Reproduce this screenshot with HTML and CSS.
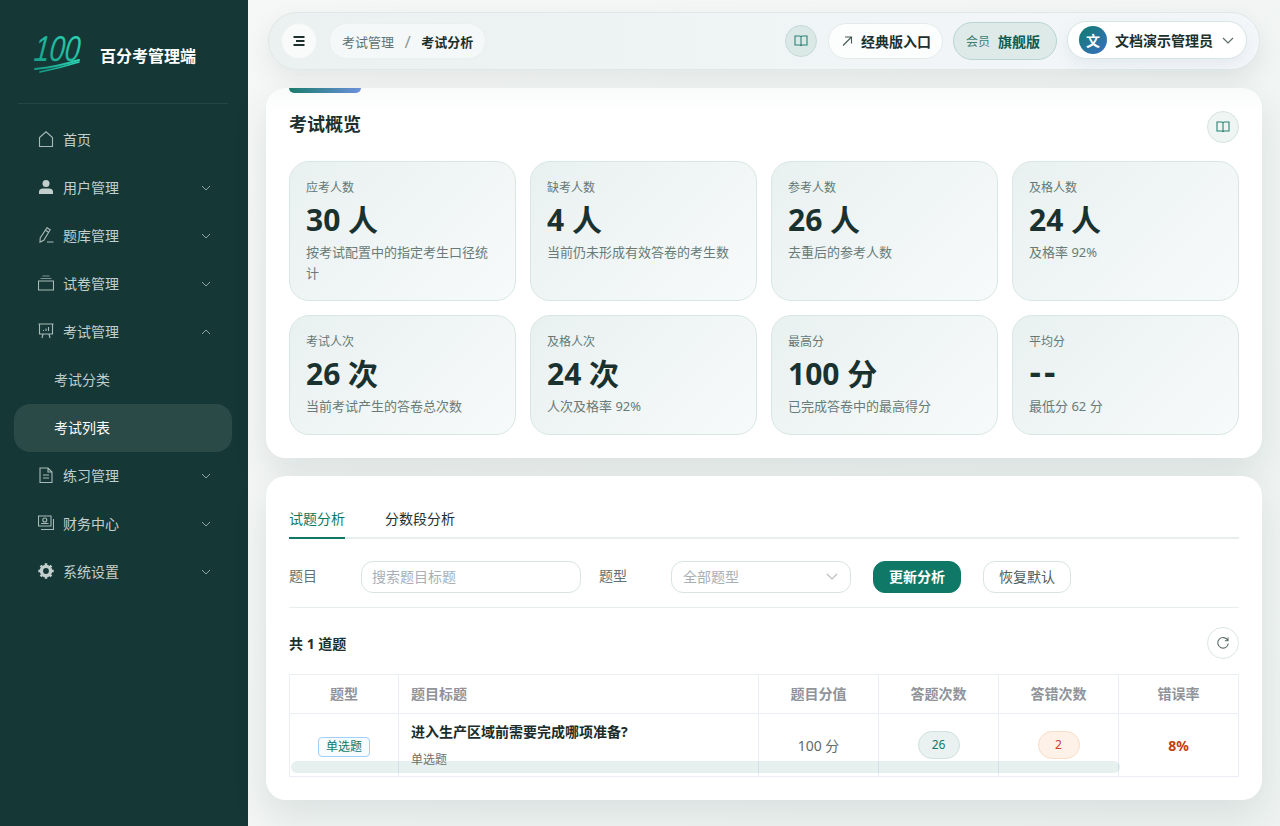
FILE: index.html
```html
<!DOCTYPE html>
<html lang="zh-CN">
<head>
  <meta charset="UTF-8" />
  <meta name="viewport" content="width=device-width, initial-scale=1.0"/>
  <title>考试分析</title>
  <link rel="stylesheet" href="styles.css">
</head>
<body>
  <!-- Sidebar -->
  <aside class="sidebar">
    <div class="brand">
      <svg class="brand-logo" width="52" height="42" viewBox="0 0 52 42">
        <defs>
          <linearGradient id="logoGrad" x1="0" y1="1" x2="1" y2="0">
            <stop offset="0" stop-color="#159a86"/>
            <stop offset="1" stop-color="#2dd8b8"/>
          </linearGradient>
        </defs>
        <text class="brand-num" x="4" y="27" textLength="46" lengthAdjust="spacingAndGlyphs" transform="skewX(-6)" fill="url(#logoGrad)">100</text>
        <path d="M3 35 Q25 33 47 26" fill="none" stroke="url(#logoGrad)" stroke-width="2" stroke-linecap="round"/>
        <path d="M8 38 Q28 34 47 28" fill="none" stroke="url(#logoGrad)" stroke-width="1.600" stroke-linecap="round"/>
      </svg>
      <span class="brand-name">百分考管理端</span>
    </div>

    <nav class="nav">
      <a class="nav-item">
        <svg class="nav-icon" viewBox="0 0 16 16"><path d="M1.500 15.500V6.500L8 .8l6.500 5.700v9z"/></svg>
        <span>首页</span>
      </a>
      <a class="nav-item">
        <svg class="nav-icon" viewBox="0 0 16 16"><circle class="solid" cx="8" cy="4.500" r="3.500"/><path class="solid" d="M1 15v-2.500C1 10.500 3 9.500 5 9.500h6c2 0 4 1 4 3V15z"/></svg>
        <span>用户管理</span>
        <svg class="nav-arrow" viewBox="0 0 10 6"><path d="M1 1l4 4 4-4"/></svg>
      </a>
      <a class="nav-item">
        <svg class="nav-icon" viewBox="0 0 16 16"><path d="M9 .8l3.200 2-6.400 10.400-3.800 1.800.2-4zM7.500 3.200l3.200 2M9 15h6.500"/></svg>
        <span>题库管理</span>
        <svg class="nav-arrow" viewBox="0 0 10 6"><path d="M1 1l4 4 4-4"/></svg>
      </a>
      <a class="nav-item">
        <svg class="nav-icon" viewBox="0 0 16 16"><path d="M.5 6h15v9H.5z"/><path class="dim" d="M2.500 3.500h11M4.500 1h7"/></svg>
        <span>试卷管理</span>
        <svg class="nav-arrow" viewBox="0 0 10 6"><path d="M1 1l4 4 4-4"/></svg>
      </a>
      <a class="nav-item">
        <svg class="nav-icon" viewBox="0 0 16 16"><path d="M.5 1h15M1.500 1v10h13V1M5 11l-1 4M11 11l1 4M5.500 8V7M8 8V5.500M10.500 8V4"/></svg>
        <span>考试管理</span>
        <svg class="nav-arrow" viewBox="0 0 10 6"><path d="M1 5l4-4 4 4"/></svg>
      </a>
      <a class="nav-item nav-sub">考试分类</a>
      <a class="nav-item nav-sub nav-active">考试列表</a>
      <a class="nav-item">
        <svg class="nav-icon" viewBox="0 0 16 16"><path d="M2 1h8l4 4v10.500H2zM10 1v4h4M5 8h6M5 11h6"/></svg>
        <span>练习管理</span>
        <svg class="nav-arrow" viewBox="0 0 10 6"><path d="M1 1l4 4 4-4"/></svg>
      </a>
      <a class="nav-item">
        <svg class="nav-icon" viewBox="0 0 16 16"><path d="M.5 1h12.500v10H.5z"/><circle cx="6.800" cy="5" r="2"/><path d="M3 8.500h7.500M15.500 4v10.500H3"/></svg>
        <span>财务中心</span>
        <svg class="nav-arrow" viewBox="0 0 10 6"><path d="M1 1l4 4 4-4"/></svg>
      </a>
      <a class="nav-item">
        <svg class="nav-icon" viewBox="0 0 16 16"><circle class="gear" cx="8" cy="8" r="4.600"/><path class="gear-teeth" d="M8 .3v3M8 12.700v3M.3 8h3M12.700 8h3M2.600 2.600l2 2M11.400 11.400l2 2M13.400 2.600l-2 2M4.600 11.400l-2 2"/></svg>
        <span>系统设置</span>
        <svg class="nav-arrow" viewBox="0 0 10 6"><path d="M1 1l4 4 4-4"/></svg>
      </a>
    </nav>
  </aside>

  <main class="main">
    <!-- Top bar -->
    <header class="topbar">
      <button class="menu-btn">
        <svg width="12" height="10" viewBox="0 0 12 10"><path d="M.5 1h11M3 5h8.500M.5 9h11" fill="none" stroke="#1c302e" stroke-width="1.800"/></svg>
      </button>
      <div class="crumbs">
        <span class="crumb">考试管理</span>
        <span class="crumb-sep">/</span>
        <span class="crumb-now">考试分析</span>
      </div>
      <div class="topbar-right">
        <button class="book-btn book-dark">
          <svg class="book-icon" viewBox="0 0 14 14"><path d="M1 2h4.700c.8 0 1.300.4 1.300 1v9c0-.6-.5-1-1.300-1H1zM13 2H8.300C7.500 2 7 2.400 7 3v9c0-.6.5-1 1.300-1H13z"/></svg>
        </button>
        <a class="classic-btn">
          <svg width="12" height="12" viewBox="0 0 12 12"><path d="M2 10.500L10 2.500M4 2h6.500v6.500" fill="none" stroke="#445a57" stroke-width="1.100"/></svg>
          <span>经典版入口</span>
        </a>
        <div class="member">
          <span class="member-label">会员</span>
          <span class="member-name">旗舰版</span>
        </div>
        <div class="user">
          <span class="avatar">文</span>
          <span class="user-name">文档演示管理员</span>
          <svg width="12" height="7" viewBox="0 0 12 7"><path d="M1 1l5 5 5-5" fill="none" stroke="#5b6d6a" stroke-width="1.200"/></svg>
        </div>
      </div>
    </header>

    <!-- Overview -->
    <section class="card overview">
      <div class="card-accent"></div>
      <div class="overview-head">
        <h2>考试概览</h2>
        <button class="book-btn book-light">
          <svg class="book-icon" viewBox="0 0 14 14"><path d="M1 2h4.700c.8 0 1.300.4 1.300 1v9c0-.6-.5-1-1.300-1H1zM13 2H8.300C7.500 2 7 2.400 7 3v9c0-.6.5-1 1.300-1H13z"/></svg>
        </button>
      </div>
      <div class="stat-grid">
        <div class="stat">
          <div class="stat-label">应考人数</div>
          <div class="stat-value">30 人</div>
          <div class="stat-desc">按考试配置中的指定考生口径统计</div>
        </div>
        <div class="stat">
          <div class="stat-label">缺考人数</div>
          <div class="stat-value">4 人</div>
          <div class="stat-desc">当前仍未形成有效答卷的考生数</div>
        </div>
        <div class="stat">
          <div class="stat-label">参考人数</div>
          <div class="stat-value">26 人</div>
          <div class="stat-desc">去重后的参考人数</div>
        </div>
        <div class="stat">
          <div class="stat-label">及格人数</div>
          <div class="stat-value">24 人</div>
          <div class="stat-desc">及格率 92%</div>
        </div>
        <div class="stat">
          <div class="stat-label">考试人次</div>
          <div class="stat-value">26 次</div>
          <div class="stat-desc">当前考试产生的答卷总次数</div>
        </div>
        <div class="stat">
          <div class="stat-label">及格人次</div>
          <div class="stat-value">24 次</div>
          <div class="stat-desc">人次及格率 92%</div>
        </div>
        <div class="stat">
          <div class="stat-label">最高分</div>
          <div class="stat-value">100 分</div>
          <div class="stat-desc">已完成答卷中的最高得分</div>
        </div>
        <div class="stat">
          <div class="stat-label">平均分</div>
          <div class="stat-value stat-empty">--</div>
          <div class="stat-desc">最低分 62 分</div>
        </div>
      </div>
    </section>

    <!-- Analysis -->
    <section class="card analysis">
      <div class="tabs">
        <a class="tab tab-active">试题分析</a>
        <a class="tab">分数段分析</a>
      </div>

      <div class="filters">
        <label class="filter-label">题目</label>
        <input class="filter-input" type="text" placeholder="搜索题目标题" />
        <label class="filter-label filter-label-2">题型</label>
        <div class="filter-select">
          <span>全部题型</span>
          <svg width="12" height="7" viewBox="0 0 12 7"><path d="M1 1l5 5 5-5" fill="none" stroke="#b6bfbd" stroke-width="1.200"/></svg>
        </div>
        <button class="btn btn-primary">更新分析</button>
        <button class="btn btn-plain">恢复默认</button>
      </div>

      <div class="list-head">
        <span class="list-count">共 1 道题</span>
        <button class="refresh-btn">
          <svg width="14" height="14" viewBox="0 0 14 14"><path d="M11.800 4.500A5.300 5.300 0 1 0 12.300 7.500M12 1.500v3.200H8.800" fill="none" stroke="#5b6d6a" stroke-width="1.100"/></svg>
        </button>
      </div>

      <div class="table-wrap">
        <table class="table">
          <colgroup>
            <col class="col-type"><col class="col-title"><col class="col-num"><col class="col-num"><col class="col-num"><col>
          </colgroup>
          <thead>
            <tr>
              <th>题型</th>
              <th class="left">题目标题</th>
              <th>题目分值</th>
              <th>答题次数</th>
              <th>答错次数</th>
              <th>错误率</th>
            </tr>
          </thead>
          <tbody>
            <tr>
              <td><span class="type-tag">单选题</span></td>
              <td class="left">
                <div class="q-title">进入生产区域前需要完成哪项准备?</div>
                <div class="q-sub">单选题</div>
              </td>
              <td class="score">100 分</td>
              <td><span class="pill pill-green">26</span></td>
              <td><span class="pill pill-orange">2</span></td>
              <td class="rate">8%</td>
            </tr>
          </tbody>
        </table>
        <div class="table-scroll"></div>
      </div>
    </section>
  </main>
</body>
</html>
```

FILE: styles.css
```css
* {
  box-sizing: border-box;
}

body {
  margin: 0;
  height: 826px;
  overflow: hidden;
  display: flex;
  font-family: "Noto Sans", "Noto Sans CJK SC", sans-serif;
  color: #1c302e;
  background: linear-gradient(135deg, #f6f8f7, #eef3f1);
}

button {
  font-family: inherit;
  cursor: pointer;
}

/* Sidebar */
.sidebar {
  width: 248px;
  flex-shrink: 0;
  background-color: #153836;
}

.brand {
  height: 104px;
  margin: 0 20px 12px 18px;
  padding: 6px 0 0 14px;
  display: flex;
  align-items: center;
  gap: 16px;
  border-bottom: 1px solid #234845;
}

.brand-logo {
  flex-shrink: 0;
  overflow: visible;
}

.brand-num {
  font-family: "Liberation Sans", sans-serif;
  font-style: italic;
  font-size: 36px;
}

.brand-name {
  font-size: 16px;
  font-weight: 700;
  color: #fff;
}

.nav {
  padding: 0 16px 0 14px;
}

.nav-item {
  height: 48px;
  padding: 0 21px 2px 24px;
  display: flex;
  align-items: center;
  font-size: 14px;
  color: #c2cfcd;
  border-radius: 16px;
}

.nav-icon {
  width: 16px;
  height: 16px;
  margin-right: 9px;
  fill: none;
  stroke: #a9b9b7;
  stroke-width: 1.100;
}

.nav-icon .solid {
  fill: #c2cfcd;
  stroke: none;
}

.nav-icon .dim {
  stroke: #7d9290;
}

.nav-icon .gear {
  fill: none;
  stroke: #c2cfcd;
  stroke-width: 3.400;
}

.nav-icon .gear-teeth {
  stroke: #c2cfcd;
  stroke-width: 2.600;
}

.nav-arrow {
  width: 10px;
  height: 6px;
  margin: 2px 0 0 auto;
  fill: none;
  stroke: #8fa3a1;
  stroke-width: 1;
}

.nav-sub {
  padding-left: 40px;
}

.nav-active {
  background-color: #2a4a48;
  color: #fff;
}

/* Main */
.main {
  flex: 1;
  min-width: 0;
  padding: 12px 18px 0;
}

.topbar {
  height: 58px;
  margin: 0 2px 18px;
  padding: 0 12px;
  display: flex;
  align-items: center;
  border: 1px solid #dfe8e6;
  border-radius: 29px;
  background: linear-gradient(90deg, #eaf1f0, #f4f7fa);
  box-shadow: 0 10px 24px rgba(21, 56, 54, 0.08);
}

.menu-btn {
  width: 36px;
  height: 36px;
  padding: 0;
  display: flex;
  align-items: center;
  justify-content: center;
  border: 1px solid #eef3f2;
  border-radius: 50%;
  background-color: #f9fbfb;
}

.crumbs {
  height: 36px;
  margin-left: 12px;
  padding: 0 12px;
  display: flex;
  align-items: center;
  font-size: 13px;
  border: 1px solid #eaf0ef;
  border-radius: 18px;
  background-color: #f5f8f9;
}

.crumb {
  color: #5f7370;
}

.crumb-sep {
  margin: 0 10.500px;
  font-size: 17px;
  line-height: 17px;
  color: #8d9c9a;
}

.crumb-now {
  font-weight: 700;
}

.topbar-right {
  margin-left: auto;
  display: flex;
  align-items: center;
  gap: 10px;
}

.book-btn {
  width: 32px;
  height: 32px;
  padding: 0;
  display: flex;
  align-items: center;
  justify-content: center;
  border-radius: 50%;
}

.book-dark {
  margin-right: 1px;
  background-color: #dbe9e6;
  border: 1px solid #c4dad6;
}

.book-light {
  background-color: #eef5f3;
  border: 1px solid #d6e5e2;
}

.book-icon {
  width: 14px;
  height: 14px;
  fill: none;
  stroke: #2b8274;
  stroke-width: 1.100;
}

.classic-btn {
  height: 36px;
  width: 115px;
  padding-left: 12px;
  display: flex;
  align-items: center;
  gap: 8px;
  font-size: 14px;
  font-weight: 700;
  border: 1px solid #e4ecea;
  border-radius: 18px;
  background-color: #fcfdfd;
}

.member {
  height: 38px;
  width: 104px;
  padding-left: 12px;
  display: flex;
  align-items: center;
  gap: 8px;
  border: 1px solid #b9d5d0;
  border-radius: 19px;
  background-color: #deeae8;
}

.member-label {
  font-size: 12px;
  color: #3f7f74;
}

.member-name {
  font-size: 14px;
  font-weight: 700;
  color: #0f5c50;
}

.user {
  height: 38px;
  width: 180px;
  margin-bottom: 2px;
  padding: 0 12px 0 11px;
  display: flex;
  align-items: center;
  border: 1px solid #d8e6e3;
  border-radius: 19px;
  background-color: #fff;
  box-shadow: 0 6px 16px rgba(60, 90, 140, 0.08);
}

.avatar {
  width: 28px;
  height: 28px;
  margin-right: 8px;
  display: flex;
  align-items: center;
  justify-content: center;
  font-size: 14px;
  font-weight: 700;
  color: #fff;
  border-radius: 50%;
  background: linear-gradient(135deg, #0f7c6c, #3a6fc4);
}

.user-name {
  padding-bottom: 1px;
  font-size: 14px;
  font-weight: 700;
  margin-right: auto;
}

/* Cards */
.card {
  position: relative;
  margin-bottom: 18px;
  border-radius: 20px;
  background-color: #fff;
  box-shadow: 0 16px 36px rgba(21, 56, 54, 0.1);
}

.overview {
  height: 370px;
  padding: 23px 23px 0;
  background: linear-gradient(#f9fafa, #fff 24px);
}

.card-accent {
  position: absolute;
  top: 0;
  left: 23px;
  width: 72px;
  height: 5px;
  border-radius: 0 0 5px 5px;
  background: linear-gradient(90deg, #1a7c6c, #6b90dc);
}

.overview-head {
  height: 32px;
  margin-bottom: 18px;
  display: flex;
  align-items: center;
  justify-content: space-between;
}

.overview-head h2 {
  margin: 0;
  padding-bottom: 8px;
  font-size: 18px;
  font-weight: 700;
}

.stat-grid {
  display: grid;
  grid-template-columns: repeat(4, 1fr);
  grid-template-rows: 140px 120px;
  gap: 14px;
}

.stat {
  padding: 16px 16px 0;
  border: 1px solid #d9e7e4;
  border-radius: 20px;
  background: linear-gradient(135deg, #e9f1f0, #f7fafa);
}

.stat-label {
  height: 20px;
  font-size: 12px;
  line-height: 20px;
  color: #647875;
}

.stat-value {
  height: 38px;
  margin-top: 3px;
  font-size: 30px;
  font-weight: 700;
  line-height: 38px;
  color: #1a322f;
}

.stat-empty {
  font-family: "DejaVu Sans", sans-serif;
  letter-spacing: 2px;
}

.stat-desc {
  margin-top: 3px;
  font-size: 13px;
  line-height: 21px;
  color: #687b78;
}

.analysis {
  height: 324px;
  padding: 23px 23px 0;
}

.tabs {
  height: 40px;
  display: flex;
  gap: 40px;
  border-bottom: 2px solid #e8eeed;
}

.tab {
  height: 40px;
  font-size: 14px;
  line-height: 40px;
}

.tab-active {
  color: #0f7866;
  border-bottom: 2px solid #0f7866;
}

.filters {
  height: 69px;
  padding-top: 22px;
  display: flex;
  align-items: flex-start;
  border-bottom: 1px solid #e8eeed;
}

.filter-label {
  width: 72px;
  font-size: 14px;
  line-height: 30px;
  color: #5f7370;
}

.filter-label-2 {
  margin-left: 18px;
}

.filter-input,
.filter-select {
  height: 32px;
  font-family: inherit;
  font-size: 14px;
  border: 1px solid #d8e4e2;
  border-radius: 12px;
  background-color: #fff;
}

.filter-input {
  width: 220px;
  padding: 0 10px 2px;
  outline: none;
}

.filter-input::placeholder {
  color: #a8b0b6;
}

.filter-select {
  width: 180px;
  padding: 0 12px 2px 11px;
  display: flex;
  align-items: center;
  justify-content: space-between;
  color: #a8b0b6;
}

.btn {
  width: 88px;
  height: 32px;
  margin-left: 22px;
  padding: 0 0 2px;
  font-size: 14px;
  border-radius: 12px;
}

.btn-primary {
  font-weight: 700;
  color: #fff;
  border: 1px solid #0f7866;
  background-color: #0f7866;
}

.btn-plain {
  color: #4c605d;
  border: 1px solid #d8e4e2;
  background-color: #fff;
}

.list-head {
  height: 66px;
  padding-top: 4px;
  display: flex;
  align-items: center;
  justify-content: space-between;
}

.list-count {
  font-size: 14px;
  font-weight: 700;
}

.refresh-btn {
  width: 32px;
  height: 32px;
  padding: 0;
  display: flex;
  align-items: center;
  justify-content: center;
  border: 1px solid #dce7e5;
  border-radius: 50%;
  background-color: #fff;
}

/* Table */
.table-wrap {
  position: relative;
}

.table {
  width: 100%;
  table-layout: fixed;
  border-collapse: collapse;
  font-size: 14px;
}

.col-type {
  width: 109px;
}

.col-title {
  width: 360px;
}

.col-num {
  width: 120px;
}

.table th,
.table td {
  padding: 0 12px;
  text-align: center;
  border: 1px solid #ebeef5;
}

.table th {
  height: 39px;
  padding-bottom: 2px;
  font-weight: 700;
  color: #909399;
}

.table td {
  height: 63px;
}

.table .left {
  text-align: left;
}

.q-title {
  margin-top: -2px;
  font-weight: 700;
  line-height: 18px;
  color: #1a2d2a;
}

.q-sub {
  margin-top: 10px;
  height: 14px;
  font-size: 12px;
  line-height: 18px;
  color: #75716a;
}

.type-tag {
  display: inline-block;
  width: 52px;
  height: 20px;
  margin-top: 4px;
  font-size: 12px;
  line-height: 18px;
  color: #0f7866;
  border: 1px solid #a3cffb;
  border-radius: 4px;
  background-color: #f8fcff;
}

.score {
  font-size: 14px;
  color: #606b6e;
}

.pill {
  display: inline-block;
  width: 42px;
  height: 28px;
  font-size: 12px;
  line-height: 26px;
  border-radius: 14px;
}

.pill-green {
  color: #15776c;
  border: 1px solid #cfe2de;
  background-color: #e9f2f0;
}

.pill-orange {
  color: #c8402c;
  border: 1px solid #fbdcc4;
  background-color: #fef2e8;
}

.rate {
  font-size: 14px;
  font-weight: 700;
  color: #c2410c;
}

.table-scroll {
  position: absolute;
  left: 2px;
  bottom: 4px;
  width: 829px;
  height: 12px;
  border-radius: 6px;
  background-color: rgba(21, 120, 105, 0.11);
}
```
